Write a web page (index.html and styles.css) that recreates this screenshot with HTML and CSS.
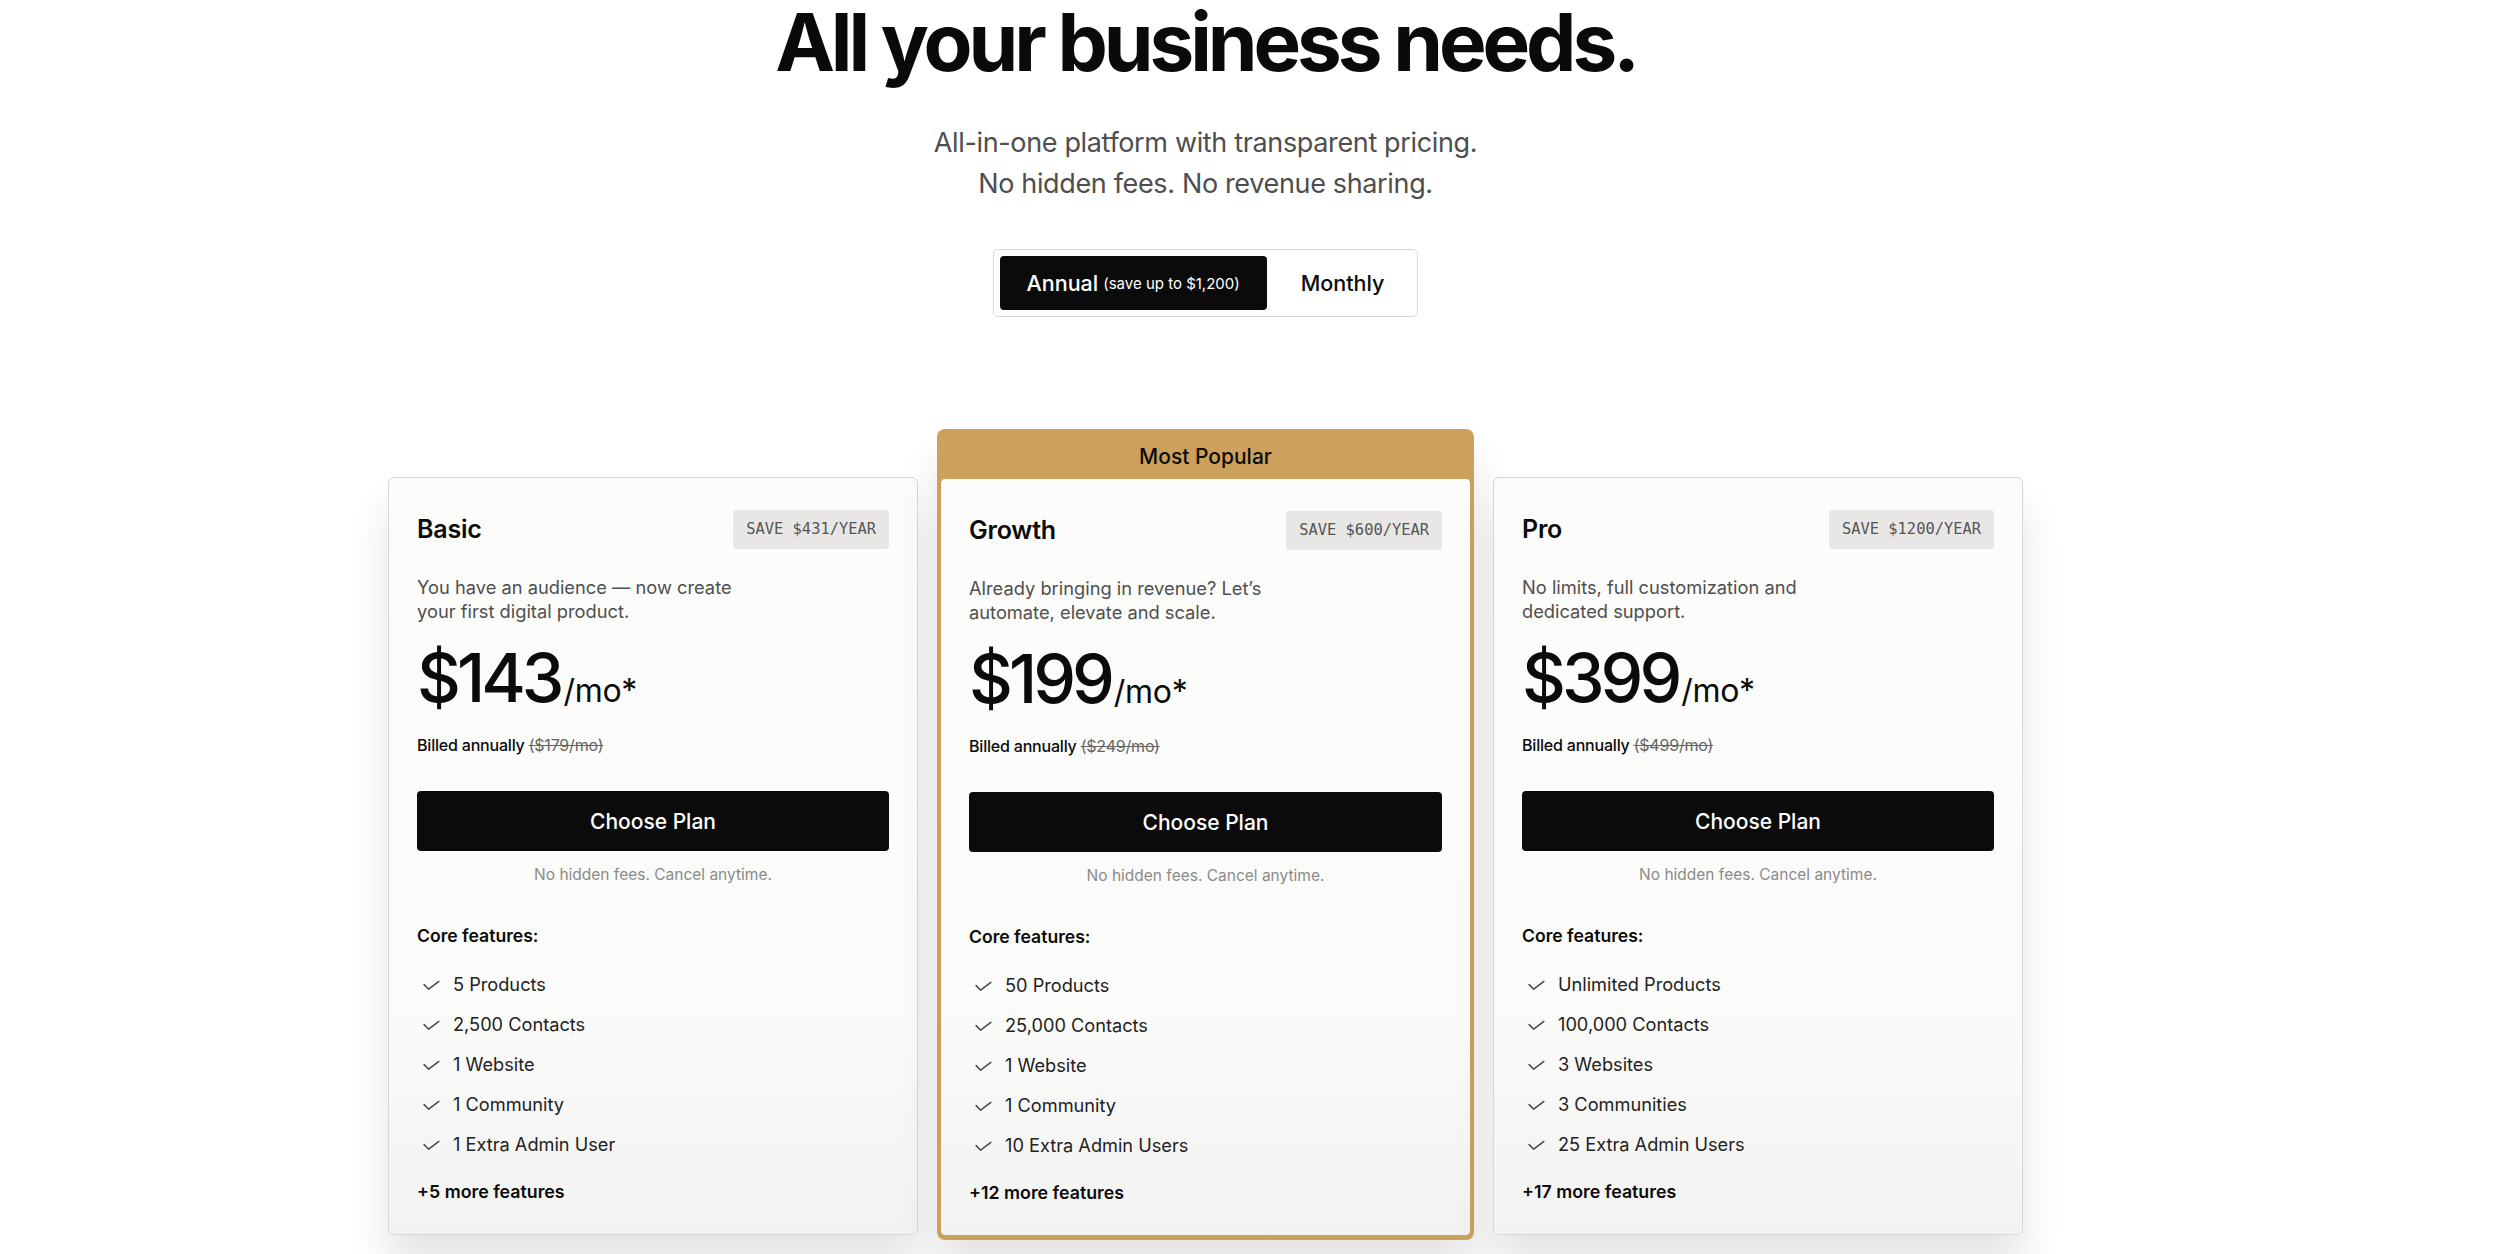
FILE: index.html
```html
<!DOCTYPE html>
<html lang="en">
<head>
<meta charset="utf-8">
<title>Pricing</title>
<link rel="stylesheet" href="styles.css">
</head>
<body>
<main class="page">
  <header class="hero">
    <h1 class="hero__title">All your business needs.</h1>
    <p class="hero__lead">All-in-one platform with transparent pricing.<br>No hidden fees. No revenue sharing.</p>
    <div class="toggle-wrap">
      <div class="toggle">
        <button class="toggle__seg toggle__seg--active">Annual <small class="toggle__note">(save up to $1,200)</small></button>
        <button class="toggle__seg toggle__seg--plain">Monthly</button>
      </div>
    </div>
  </header>

  <section class="plans">
    <article class="card">
      <div class="card__head">
        <h2 class="card__name">Basic</h2>
        <span class="badge">SAVE $431/YEAR</span>
      </div>
      <p class="card__desc">You have an audience — now create<br>your first digital product.</p>
      <div class="price"><span class="price__amount">$143</span><span class="price__unit">/mo*</span></div>
      <p class="billed">Billed annually <del class="billed__old">($179/mo)</del></p>
      <button class="cta">Choose Plan</button>
      <p class="fine">No hidden fees. Cancel anytime.</p>
      <h3 class="feat-title">Core features:</h3>
      <ul class="feats">
        <li class="feat"><svg class="check" viewBox="0 0 18 11"><path d="M1.2 4.6 L6 9.4 L16.8 1.2"/></svg>5 Products</li>
        <li class="feat"><svg class="check" viewBox="0 0 18 11"><path d="M1.2 4.6 L6 9.4 L16.8 1.2"/></svg>2,500 Contacts</li>
        <li class="feat"><svg class="check" viewBox="0 0 18 11"><path d="M1.2 4.6 L6 9.4 L16.8 1.2"/></svg>1 Website</li>
        <li class="feat"><svg class="check" viewBox="0 0 18 11"><path d="M1.2 4.6 L6 9.4 L16.8 1.2"/></svg>1 Community</li>
        <li class="feat"><svg class="check" viewBox="0 0 18 11"><path d="M1.2 4.6 L6 9.4 L16.8 1.2"/></svg>1 Extra Admin User</li>
      </ul>
      <p class="more">+5 more features</p>
    </article>

    <div class="popular">
      <div class="popular__label">Most Popular</div>
      <article class="card card--popular">
        <div class="card__head">
          <h2 class="card__name">Growth</h2>
          <span class="badge">SAVE $600/YEAR</span>
        </div>
        <p class="card__desc">Already bringing in revenue? Let’s<br>automate, elevate and scale.</p>
        <div class="price"><span class="price__amount">$199</span><span class="price__unit">/mo*</span></div>
        <p class="billed">Billed annually <del class="billed__old">($249/mo)</del></p>
        <button class="cta">Choose Plan</button>
        <p class="fine">No hidden fees. Cancel anytime.</p>
        <h3 class="feat-title">Core features:</h3>
        <ul class="feats">
          <li class="feat"><svg class="check" viewBox="0 0 18 11"><path d="M1.2 4.6 L6 9.4 L16.8 1.2"/></svg>50 Products</li>
          <li class="feat"><svg class="check" viewBox="0 0 18 11"><path d="M1.2 4.6 L6 9.4 L16.8 1.2"/></svg>25,000 Contacts</li>
          <li class="feat"><svg class="check" viewBox="0 0 18 11"><path d="M1.2 4.6 L6 9.4 L16.8 1.2"/></svg>1 Website</li>
          <li class="feat"><svg class="check" viewBox="0 0 18 11"><path d="M1.2 4.6 L6 9.4 L16.8 1.2"/></svg>1 Community</li>
          <li class="feat"><svg class="check" viewBox="0 0 18 11"><path d="M1.2 4.6 L6 9.4 L16.8 1.2"/></svg>10 Extra Admin Users</li>
        </ul>
        <p class="more">+12 more features</p>
      </article>
    </div>

    <article class="card">
      <div class="card__head">
        <h2 class="card__name">Pro</h2>
        <span class="badge">SAVE $1200/YEAR</span>
      </div>
      <p class="card__desc">No limits, full customization and<br>dedicated support.</p>
      <div class="price"><span class="price__amount">$399</span><span class="price__unit">/mo*</span></div>
      <p class="billed">Billed annually <del class="billed__old">($499/mo)</del></p>
      <button class="cta">Choose Plan</button>
      <p class="fine">No hidden fees. Cancel anytime.</p>
      <h3 class="feat-title">Core features:</h3>
      <ul class="feats">
        <li class="feat"><svg class="check" viewBox="0 0 18 11"><path d="M1.2 4.6 L6 9.4 L16.8 1.2"/></svg>Unlimited Products</li>
        <li class="feat"><svg class="check" viewBox="0 0 18 11"><path d="M1.2 4.6 L6 9.4 L16.8 1.2"/></svg>100,000 Contacts</li>
        <li class="feat"><svg class="check" viewBox="0 0 18 11"><path d="M1.2 4.6 L6 9.4 L16.8 1.2"/></svg>3 Websites</li>
        <li class="feat"><svg class="check" viewBox="0 0 18 11"><path d="M1.2 4.6 L6 9.4 L16.8 1.2"/></svg>3 Communities</li>
        <li class="feat"><svg class="check" viewBox="0 0 18 11"><path d="M1.2 4.6 L6 9.4 L16.8 1.2"/></svg>25 Extra Admin Users</li>
      </ul>
      <p class="more">+17 more features</p>
    </article>
  </section>
</main>
</body>
</html>
```

FILE: styles.css
```css
* { box-sizing: border-box; }

html, body {
  margin: 0;
  padding: 0;
  background: #ffffff;
}

body {
  font-family: Inter, "Noto Sans", "Liberation Sans", sans-serif;
  color: #0b0b0b;
  overflow: hidden;
}

.page {
  width: 1635px;
  margin-left: 388px;
  padding-top: 2px;
  padding-bottom: 80px;
}

/* ---------- hero ---------- */
.hero { text-align: center; }

.hero__title {
  margin: 0;
  font-size: 80px;
  line-height: 80px;
  font-weight: 700;
  letter-spacing: -4.1px;
  color: #0a0a0a;
}

.hero__lead {
  margin: 40px 0 0;
  font-size: 27px;
  line-height: 41px;
  font-weight: 400;
  color: #4e4e4e;
  letter-spacing: -0.35px;
}

.toggle-wrap {
  display: flex;
  justify-content: center;
  margin-top: 45px;
}

.toggle {
  display: flex;
  height: 68px;
  padding: 6px;
  border: 1px solid #d9d9d9;
  border-radius: 5px;
  background: #fff;
}

.toggle__seg {
  display: flex;
  align-items: center;
  border: 0;
  margin: 0;
  font-family: inherit;
  font-size: 21.5px;
  font-weight: 500;
  background: transparent;
  color: #0b0b0b;
  white-space: nowrap;
  cursor: pointer;
}

.toggle__seg--active {
  background: #0b0b0b;
  color: #fff;
  border-radius: 4px;
  padding: 0 27px;
}

.toggle__seg--plain {
  padding: 0 27px 0 34px;
}

.toggle__note {
  font-size: 15px;
  font-weight: 400;
  margin-left: 5px;
}

/* ---------- plans ---------- */
.plans {
  display: grid;
  grid-template-columns: 530px 537px 530px;
  column-gap: 19px;
  align-items: end;
  margin-top: 112px;
}

.card {
  display: flex;
  flex-direction: column;
  border: 1px solid #d6d6d4;
  border-radius: 6px;
  padding: 32px 28px 31px;
  background: linear-gradient(to bottom, #fcfcfa 0%, #fbfbf9 70%, #f2f2f0 100%);
  box-shadow: 0 30px 40px 0 rgba(0, 0, 0, 0.11);
}

.popular {
  background: #cda15b;
  border-radius: 8px;
  padding: 0 3px 4px;
  margin-bottom: -5px;
  box-shadow: 0 30px 40px 0 rgba(0, 0, 0, 0.11);
}

.popular__label {
  height: 49px;
  padding-top: 13px;
  font-size: 21px;
  line-height: 30px;
  font-weight: 500;
  text-align: center;
  color: #0b0b0b;
}

.card--popular {
  border-color: #cda15b;
  border-radius: 5px;
  box-shadow: none;
}

.card__head {
  display: flex;
  justify-content: space-between;
  align-items: center;
  height: 39px;
}

.card__name {
  margin: 0;
  font-size: 25px;
  line-height: 39px;
  font-weight: 600;
  letter-spacing: -0.2px;
}

.badge {
  height: 39px;
  padding: 0 13px;
  background: #e8e7e5;
  border-radius: 3px;
  font-family: "DejaVu Sans Mono", "Liberation Mono", monospace;
  font-size: 15.4px;
  line-height: 39px;
  color: #555;
  white-space: nowrap;
}

.card__desc {
  margin: 26px 0 0;
  font-size: 18.3px;
  line-height: 24px;
  color: #4f4f4f;
}

.price {
  display: flex;
  align-items: baseline;
  margin-top: 19px;
  height: 70px;
  line-height: 70px;
}

.price__amount {
  font-size: 68px;
  font-weight: 500;
  letter-spacing: -4px;
}

.price__unit {
  font-size: 32px;
  font-weight: 400;
  margin-left: 3px;
  letter-spacing: -0.3px;
}

.billed {
  margin: 23px 0 0;
  font-size: 16px;
  line-height: 20px;
  font-weight: 500;
  letter-spacing: -0.2px;
}

.billed__old {
  font-weight: 400;
  color: #666;
}

.cta {
  margin-top: 36px;
  height: 60px;
  width: 100%;
  border: 0;
  border-radius: 4px;
  background: #0b0b0b;
  color: #fff;
  font-family: inherit;
  font-size: 21px;
  font-weight: 500;
  cursor: pointer;
}

.fine {
  margin: 13.5px 0 0;
  font-size: 15.5px;
  line-height: 20px;
  color: #8b8b8b;
  text-align: center;
}

.feat-title {
  margin: 40px 0 0;
  font-size: 17.6px;
  line-height: 22px;
  font-weight: 600;
}

.feats {
  list-style: none;
  margin: 17px 0 0;
  padding: 0;
}

.feat {
  display: flex;
  align-items: center;
  height: 40px;
  font-size: 18.2px;
  line-height: 40px;
  color: #222;
}

.check {
  width: 17px;
  height: 11px;
  margin: 3px 13px 0 6px;
  fill: none;
  stroke: #4a4a4a;
  stroke-width: 1.6;
  stroke-linecap: round;
  stroke-linejoin: round;
}

.more {
  margin: 17px 0 0;
  font-size: 17.8px;
  line-height: 22px;
  font-weight: 600;
}
```
